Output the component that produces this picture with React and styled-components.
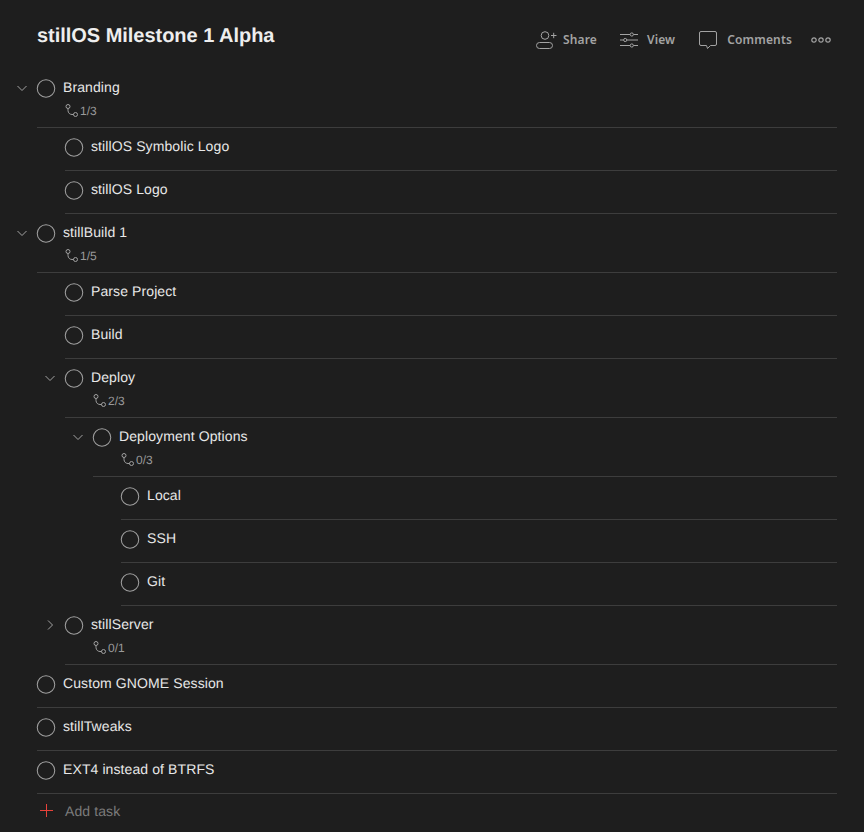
import React from "react";
import styled, { createGlobalStyle } from "styled-components";

const Global = createGlobalStyle`
  html, body { margin: 0; padding: 0; background: #1e1e1e; height: 832px; overflow: hidden; }
  body { font-family: "Liberation Sans", Arial, sans-serif; color: #eee; text-rendering: geometricPrecision; }
`;
const Page = styled.div`
  padding: 0 27px 0 9px;
  background: #1e1e1e;
  height: 832px;
  box-sizing: border-box;
  overflow: hidden;
`;
const Header = styled.header`
  height: 69px;
  margin-left: 28px;
  display: flex;
  align-items: flex-start;
  justify-content: space-between;
`;
const Title = styled.h1`
  margin: 23px 0 0;
  font-size: 20px;
  line-height: 26px;
  font-weight: 700;
  letter-spacing: -0.03px;
  color: #eeeeee;
`;
const Actions = styled.div`
  display: flex;
  align-items: center;
  margin-top: 28px;
  margin-right: 6px;
`;
const Action = styled.button`
  display: flex;
  align-items: center;
  gap: ${p => p.$gap}px;
  margin-left: ${p => p.$left}px;
  padding: 0;
  background: none;
  border: 0;
  color: #a3a3a3;
  font: 600 12px/24px "Noto Sans", "Open Sans", sans-serif;
  letter-spacing: 0.15px;
`;
const Row = styled.div`
  display: flex;
  margin-left: ${p => p.$depth * 28}px;
`;
const CaretSlot = styled.div`
  flex: 0 0 26px;
  height: 21px;
  margin: 8px 2px 0 0;
  display: flex;
  align-items: center;
  justify-content: center;
  color: #a3a3a3;
  padding-top: 1px;
  box-sizing: border-box;
`;
const Body = styled.div`
  flex: 1;
  min-width: 0;
  display: flex;
  gap: 8px;
  padding: 8px 0 13px;
  border-bottom: 1px solid #3d3d3d;
`;
const Circle = styled.span`
  flex: none;
  width: 18px;
  height: 18px;
  margin-top: 2px;
  border: 1px solid #a0a0a0;
  border-radius: 50%;
  box-sizing: border-box;
  transform: translateY(0.5px) scale(1.03);
`;
const Text = styled.div``;
const Name = styled.div`
  font-size: 14px;
  line-height: 21px;
  letter-spacing: 0.1px;
  color: #e8e8e8;
`;
const Meta = styled.div`
  display: flex;
  align-items: center;
  gap: 1px;
  height: 16px;
  margin: 5px 0 -5px 2px;
  font-size: 12px;
  color: #9a9a9a;
`;
const AddRow = styled.div`
  display: flex;
  align-items: center;
  gap: 12px;
  margin-left: 31px;
  height: 33px;
  font-size: 14px;
  letter-spacing: 0.1px;
  color: #7b7b7b;
`;

const Chevron = ({ right }) => (
  <svg width="12" height="12" viewBox="0 0 12 12" fill="none" stroke="currentColor" strokeWidth="1">
    {right ? <path d="M4 1.5 8.5 6 4 10.5" /> : <path d="M1.5 4 6 8.5 10.5 4" />}
  </svg>
);
const Sub = () => (
  <svg width="14" height="14" viewBox="0 0 14 14" fill="none" stroke="#a0a0a0" strokeWidth="1">
    <circle cx="3" cy="2.5" r="2" />
    <circle cx="10.5" cy="10.5" r="2" />
    <path d="M3 4.5V6.5C3 9 5 10.5 7 10.5H8.5" />
  </svg>
);
const ShareIcon = () => (
  <svg width="21" height="18" viewBox="0 0 21 18" fill="none" stroke="currentColor" strokeWidth="1">
    <circle cx="9" cy="4.5" r="3.8" />
    <rect x="0.5" y="11.5" width="16" height="6" rx="3" />
    <path d="M15 4.5h5.5M17.7 1.8v5.4" />
  </svg>
);
const ViewIcon = () => (
  <svg width="18" height="16" viewBox="0 0 18 16" fill="none" stroke="currentColor" strokeWidth="1">
    <path d="M0 2.5h10M13.5 2.5H18M0 8h3.5M7 8h11M0 13.5h10M13.5 13.5H18" />
    <circle cx="11.8" cy="2.5" r="1.6" />
    <circle cx="5.2" cy="8" r="1.6" />
    <circle cx="11.8" cy="13.5" r="1.6" />
  </svg>
);
const CommentIcon = () => (
  <svg width="18" height="18" viewBox="0 0 18 18" fill="none" stroke="currentColor" strokeWidth="1">
    <path d="M2 .5h14a1.5 1.5 0 0 1 1.5 1.5v11a1.5 1.5 0 0 1-1.5 1.5h-4.5L8.5 17.5l-1-3H2A1.5 1.5 0 0 1 .5 13V2A1.5 1.5 0 0 1 2 .5Z" />
  </svg>
);
const DotsIcon = () => (
  <svg width="20" height="8" viewBox="0 0 20 8" fill="none" stroke="currentColor" strokeWidth="1.2">
    <circle cx="3" cy="4" r="2.2" />
    <circle cx="10" cy="4" r="2.2" />
    <circle cx="17" cy="4" r="2.2" />
  </svg>
);
const PlusIcon = () => (
  <svg width="13" height="13" viewBox="0 0 13 13" fill="none" stroke="#e8423a" strokeWidth="1">
    <path d="M6.5 0v13M0 6.5h13" />
  </svg>
);

const tasks = [
  { d: 0, name: "Branding", caret: "down", meta: "1/3" },
  { d: 1, name: "stillOS Symbolic Logo" },
  { d: 1, name: "stillOS Logo" },
  { d: 0, name: "stillBuild 1", caret: "down", meta: "1/5" },
  { d: 1, name: "Parse Project" },
  { d: 1, name: "Build" },
  { d: 1, name: "Deploy", caret: "down", meta: "2/3" },
  { d: 2, name: "Deployment Options", caret: "down", meta: "0/3" },
  { d: 3, name: "Local" },
  { d: 3, name: "SSH" },
  { d: 3, name: "Git" },
  { d: 1, name: "stillServer", caret: "right", meta: "0/1" },
  { d: 0, name: "Custom GNOME Session" },
  { d: 0, name: "stillTweaks" },
  { d: 0, name: "EXT4 instead of BTRFS" },
];

export default function App() {
  return (
    <Page>
      <Global />
      <Header>
        <Title>stillOS Milestone 1 Alpha</Title>
        <Actions>
          <Action $gap={6} $left={0}><ShareIcon />Share</Action>
          <Action $gap={9} $left={23}><ViewIcon />View</Action>
          <Action $gap={10} $left={24}><CommentIcon />Comments</Action>
          <Action $gap={0} $left={19}><DotsIcon /></Action>
        </Actions>
      </Header>
      {tasks.map(t => (
        <Row key={t.name} $depth={t.d}>
          <CaretSlot>{t.caret && <Chevron right={t.caret === "right"} />}</CaretSlot>
          <Body>
            <Circle />
            <Text>
              <Name>{t.name}</Name>
              {t.meta && <Meta><Sub />{t.meta}</Meta>}
            </Text>
          </Body>
        </Row>
      ))}
      <AddRow><PlusIcon />Add task</AddRow>
    </Page>
  );
}
